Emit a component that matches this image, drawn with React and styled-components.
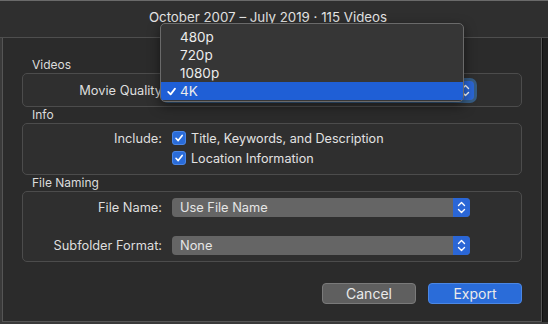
import styled, { createGlobalStyle } from 'styled-components';

const GlobalStyle = createGlobalStyle`
  html, body {
    margin: 0;
    padding: 0;
    background: #2b2b2b;
  }
  * { box-sizing: border-box; }
`;

// window frame
const Window = styled.div`
  position: relative;
  width: 548px;
  height: 324px;
  overflow: hidden;
  background: #3a3a3a;
  font-family: Inter, "Noto Sans", "Liberation Sans", sans-serif;
  color: #dedede;
  display: flex;
  flex-direction: column;
`;

const TitleBar = styled.div`
  height: 38px;
  flex: none;
  background: #2f2f2f;
  border-top: 1px solid #6a6a6a;
  border-bottom: 1px solid #4e4e4e;
  display: flex;
  justify-content: center;
  padding: 8px 12px 0 0;
  font-size: 13.3px;
  color: #e4e4e4;
`;

const Body = styled.div`
  flex: 1;
  display: flex;
`;

const Sheet = styled.div`
  width: 540px;
  margin-left: 2px;
  border-left: 1px solid #555;
  border-right: 1px solid #555;
  border-bottom: 1px solid #555;
  height: 284px;
  background: #2b2b2b;
  padding: 19px 19px 0;
  display: flex;
  flex-direction: column;
`;

const Backdrop = styled.div`
  flex: 1;
  height: 284px;
  background: #1f1f1f;
  border-left: 1px solid #111;
`;

// group box
const GroupLabel = styled.div`
  height: 16px;
  line-height: 16px;
  padding-left: 10px;
  font-size: 12px;
  color: #dcdcdc;
`;

const Group = styled.div`
  border: 1px solid #4c4c4c;
  border-radius: 5px;
  background: #2f2f2f;
  padding: ${(p) => p.$pad || '0'};
  display: grid;
  grid-template-columns: 139px 1fr;
  column-gap: ${(p) => p.$gap || '10px'};
  row-gap: ${(p) => p.$rowGap || '0'};
  align-items: center;
  height: ${(p) => p.$h};
`;

const FieldLabel = styled.div`
  text-align: right;
  font-size: 12.8px;
  color: #dedede;
  white-space: nowrap;
`;

const Popup = styled.div`
  width: ${(p) => p.$w || '298px'};
  height: 19px;
  border-radius: 4px;
  background: #656565;
  display: flex;
  align-items: center;
  font-size: 12.8px;
  color: #e6e6e6;
  padding-left: 8px;
  overflow: hidden;
  box-shadow: ${(p) => (p.$focus ? '0 0 0 3px rgba(60, 130, 200, 0.55)' : 'none')};
`;

const PopupText = styled.span`
  flex: 1;
`;

const Stepper = styled.div`
  width: 17px;
  height: 100%;
  background: #2a66d6;
  display: flex;
  align-items: center;
  justify-content: center;
`;

const CheckRow = styled.label`
  display: flex;
  align-items: center;
  gap: 5px;
  font-size: 12.6px;
  color: #e2e2e2;
  height: 20px;
`;

const CheckBox = styled.span`
  width: 14px;
  height: 14px;
  border-radius: 3px;
  background: #2a6cd9;
  border: 1px solid #4a86e6;
  display: flex;
  align-items: center;
  justify-content: center;
`;

const Buttons = styled.div`
  display: flex;
  justify-content: flex-end;
  gap: 12px;
  margin-top: 21px;
`;

const Button = styled.div`
  width: 94px;
  height: 21px;
  border-radius: 4px;
  display: flex;
  align-items: center;
  justify-content: center;
  font-size: 14px;
  color: #eaeaea;
  background: ${(p) => (p.$primary ? '#2a6cd9' : '#5f5f5f')};
  border: 1px solid ${(p) => (p.$primary ? '#4b87e4' : '#7a7a7a')};
`;

// dropdown menu floating over the sheet
const Menu = styled.div`
  position: absolute;
  left: 160px;
  top: 23px;
  width: 304px;
  height: 79px;
  background: #363636;
  border: 1px solid #6a6a6a;
  border-radius: 5px;
  padding-top: 4px;
  box-shadow: 0 4px 12px rgba(0, 0, 0, 0.5);
  overflow: hidden;
`;

const MenuItem = styled.div`
  height: 18px;
  display: flex;
  align-items: center;
  padding-left: 19px;
  position: relative;
  font-size: 13.5px;
  color: #ececec;
  background: ${(p) => (p.$active ? '#1f5fd6' : 'transparent')};
`;

const Check = styled.span`
  position: absolute;
  left: 5px;
  top: 4px;
  display: flex;
`;

const Chevrons = () => (
  <svg width="9" height="13" viewBox="0 0 9 13" fill="none" stroke="#fff" strokeWidth="1.4" strokeLinecap="round" strokeLinejoin="round">
    <path d="M1.5 4.5 L4.5 1.5 L7.5 4.5" />
    <path d="M1.5 8.5 L4.5 11.5 L7.5 8.5" />
  </svg>
);

const Tick = ({ size = 10 }) => (
  <svg width={size} height={size} viewBox="0 0 10 10" fill="none" stroke="#fff" strokeWidth="1.6" strokeLinecap="round" strokeLinejoin="round">
    <path d="M2 5.3 L4.2 7.6 L8.2 2.4" />
  </svg>
);

const qualities = ['480p', '720p', '1080p', '4K'];

const App = () => {
  return (
    <Window>
      <GlobalStyle />
      <TitleBar>October 2007 – July 2019 · 115 Videos</TitleBar>
      <Body>
        <Sheet>
          <GroupLabel>Videos</GroupLabel>
          <Group $h="34px" $gap="2px">
            <FieldLabel>Movie Quality</FieldLabel>
            {/* the open menu covers this popup, only its stepper peeks out */}
            <Popup $w="310px" $focus>
              <PopupText />
              <Stepper><Chevrons /></Stepper>
            </Popup>
          </Group>

          <GroupLabel>Info</GroupLabel>
          <Group $h="52px" $pad="4px 0 6px">
            <FieldLabel>Include:</FieldLabel>
            <CheckRow><CheckBox><Tick /></CheckBox>Title, Keywords, and Description</CheckRow>
            <div />
            <CheckRow><CheckBox><Tick /></CheckBox>Location Information</CheckRow>
          </Group>

          <GroupLabel>File Naming</GroupLabel>
          <Group $h="71px" $pad="6px 0 6px" $rowGap="18px">
            <FieldLabel>File Name:</FieldLabel>
            <Popup>
              <PopupText>Use File Name</PopupText>
              <Stepper><Chevrons /></Stepper>
            </Popup>
            <FieldLabel>Subfolder Format:</FieldLabel>
            <Popup>
              <PopupText>None</PopupText>
              <Stepper><Chevrons /></Stepper>
            </Popup>
          </Group>

          <Buttons>
            <Button>Cancel</Button>
            <Button $primary>Export</Button>
          </Buttons>
        </Sheet>
        <Backdrop />
      </Body>

      <Menu>
        {qualities.map((q) => (
          <MenuItem key={q} $active={q === '4K'}>
            {q === '4K' && <Check><Tick size={11} /></Check>}
            {q}
          </MenuItem>
        ))}
      </Menu>
    </Window>
  );
};

export default App;
